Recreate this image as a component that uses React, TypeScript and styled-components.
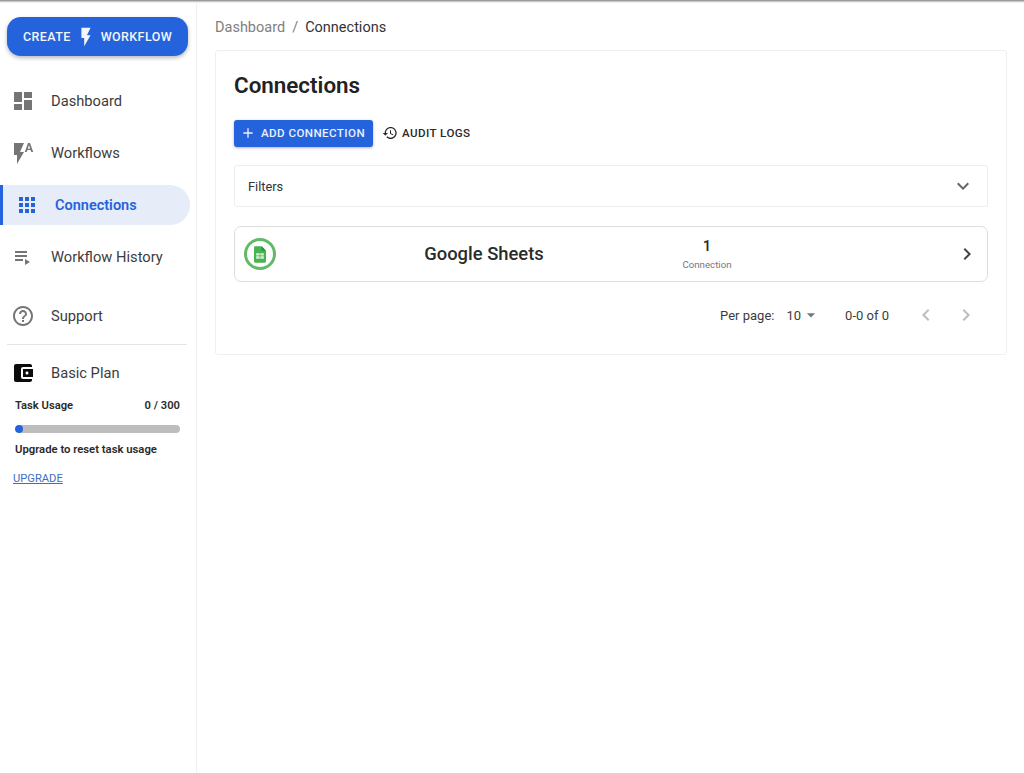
import styled, { createGlobalStyle } from "styled-components";

const blue = "#2563dc";

const paths = {
  dashboard: "M3 13h8V3H3v10zm0 8h8v-6H3v6zm10 0h8V11h-8v10zm0-18v6h8V3h-8z",
  apps: "M4 8h4V4H4v4zm6 12h4v-4h-4v4zm-6 0h4v-4H4v4zm0-6h4v-4H4v4zm6 0h4v-4h-4v4zm6-10v4h4V4h-4zm-6 4h4V4h-4v4zm6 6h4v-4h-4v4zm0 6h4v-4h-4v4z",
  bolt: "M7 2v11h3v9l7-12h-4l4-8z",
  flashAuto: "M3 2v12h3v9l7-12H9l4-9H3zm16 0h-2l-3.2 9h1.9l.7-2h3.2l.7 2h1.9L19 2zm-2.15 5.65L18 4l1.15 3.65h-2.3z",
  playlist: "M4 10h12v2H4zm0-4h12v2H4zm0 8h8v2H4zm10 0v6l5-3z",
  help: "M11 18h2v-2h-2v2zm1-16C6.48 2 2 6.48 2 12s4.48 10 10 10 10-4.48 10-10S17.52 2 12 2zm0 18c-4.41 0-8-3.59-8-8s3.59-8 8-8 8 3.59 8 8-3.59 8-8 8zm0-14c-2.21 0-4 1.79-4 4h2c0-1.1.9-2 2-2s2 .9 2 2c0 2-3 1.75-3 5h2c0-2.25 3-2.5 3-5 0-2.21-1.79-4-4-4z",
  wallet: "M21 18v1c0 1.1-.9 2-2 2H5c-1.11 0-2-.9-2-2V5c0-1.1.89-2 2-2h14c1.1 0 2 .9 2 2v1h-9c-1.11 0-2 .9-2 2v8c0 1.1.89 2 2 2h9zm-9-2h10V8H12v8zm4-2.5c-.83 0-1.5-.67-1.5-1.5s.67-1.5 1.5-1.5 1.5.67 1.5 1.5-.67 1.5-1.5 1.5z",
  history: "M13 3c-4.97 0-9 4.03-9 9H1l3.89 3.89.07.14L9 12H6c0-3.87 3.13-7 7-7s7 3.13 7 7-3.13 7-7 7c-1.93 0-3.68-.79-4.94-2.06l-1.42 1.42C8.27 19.99 10.51 21 13 21c4.97 0 9-4.03 9-9s-4.03-9-9-9zm-1 5v5l4.28 2.54.72-1.21-3.5-2.08V8H12z",
  add: "M19 13h-6v6h-2v-6H5v-2h6V5h2v6h6v2z",
  expand: "M16.59 8.59L12 13.17 7.41 8.59 6 10l6 6 6-6z",
  right: "M10 6L8.59 7.41 13.17 12l-4.58 4.59L10 18l6-6z",
  left: "M15.41 7.41L14 6l-6 6 6 6 1.41-1.41L10.83 12z",
  drop: "M7 10l5 5 5-5z",
};

const GlobalStyle = createGlobalStyle`
  * { box-sizing: border-box; }
  html, body { margin: 0; height: 100%; background: #fff; }
  body { font-family: Roboto, "Liberation Sans", sans-serif; color: #242424; }
`;

const Svg = styled.svg<{ $size: number; $color: string }>`
  width: ${(p) => p.$size}px;
  height: ${(p) => p.$size}px;
  fill: ${(p) => p.$color};
  flex: none;
  display: block;
`;

function Icon({ d, size = 24, color = "#757575" }: { d: string; size?: number; color?: string }) {
  return (
    <Svg viewBox="0 0 24 24" $size={size} $color={color}>
      <path d={d} />
    </Svg>
  );
}

const Page = styled.div`
  height: 773px;
  overflow: hidden;
  display: flex;
  flex-direction: column;
`;

const TopEdge = styled.div`
  height: 3px;
  flex: none;
  background: linear-gradient(#9a9a9a, #9a9a9a 34%, #c9c9c9 34%, #c9c9c9 67%, #efefef 67%);
`;

const Shell = styled.div`
  flex: 1;
  display: flex;
  min-height: 0;
`;

const Sidebar = styled.aside`
  width: 197px;
  flex: none;
  border-right: 1px solid #f0f0f0;
  padding-top: 14px;
  display: flex;
  flex-direction: column;
`;

const CreateButton = styled.button`
  margin: 0 8px 0 7px;
  height: 39px;
  border: 0;
  border-radius: 14px;
  background: ${blue};
  color: #f2f6fe;
  font: 500 12.5px Roboto, sans-serif;
  letter-spacing: 0.4px;
  display: flex;
  align-items: center;
  justify-content: center;
  gap: 4px;
  box-shadow: 0 2px 4px rgba(0, 0, 0, 0.28);
`;

const Nav = styled.nav`
  margin-top: 25px;
  display: flex;
  flex-direction: column;
  gap: 12px;
`;

const NavItem = styled.div<{ $active?: boolean }>`
  height: 40px;
  width: 190px;
  display: flex;
  align-items: center;
  gap: 16px;
  font-size: ${(p) => (p.$active ? 14.5 : 14.7)}px;
  padding-left: ${(p) => (p.$active ? 12 : 11)}px;
  color: ${(p) => (p.$active ? blue : "#3c3c3c")};
  font-weight: ${(p) => (p.$active ? 600 : 400)};
  background: ${(p) => (p.$active ? "#e6edf9" : "transparent")};
  border-left: ${(p) => (p.$active ? `3px solid ${blue}` : "0")};
  border-radius: ${(p) => (p.$active ? "0 20px 20px 0" : "0")};
`;

const SupportItem = styled(NavItem)`
  margin-top: 19px;
`;

const Divider = styled.hr`
  margin: 8px 9px 0 7px;
  border: 0;
  border-top: 1px solid #e4e4e4;
`;

const PlanItem = styled(NavItem)`
  margin-top: 8px;
`;

const Usage = styled.div`
  padding: 6px 16px 0 15px;
`;

const UsageRow = styled.div`
  display: flex;
  justify-content: space-between;
  font-size: 11.2px;
  font-weight: 600;
  color: #2a2a2a;
  line-height: 14px;
`;

const Track = styled.div`
  margin-top: 12px;
  height: 8px;
  border-radius: 4px;
  background: #bdbdbd;
  overflow: hidden;
`;

const Fill = styled.div`
  height: 100%;
  border-radius: 4px;
  background: ${blue};
`;

const UsageNote = styled.div`
  margin-top: 10px;
  font-size: 11.3px;
  font-weight: 600;
  line-height: 14px;
  color: #2a2a2a;
`;

const UpgradeLink = styled.a`
  display: block;
  margin: 15px 0 0 13px;
  font-size: 11.2px;
  line-height: 14px;
  color: #3c6fc4;
  text-decoration: underline;
`;

const Main = styled.main`
  flex: 1;
  padding: 16px 17px 0 18px;
`;

const Crumbs = styled.div`
  display: flex;
  gap: 7px;
  font-size: 14.5px;
  line-height: 18px;
  color: #808080;
`;

const CrumbCurrent = styled.span`
  color: #333;
`;

const Card = styled.section`
  margin-top: 13px;
  height: 305px;
  border: 1px solid #efefef;
  border-radius: 3px;
  padding: 19px 18px 0;
`;

const Title = styled.h1`
  margin: 0;
  font-size: 22.4px;
  line-height: 30px;
  font-weight: 600;
  color: #222;
`;

const Actions = styled.div`
  margin-top: 20px;
  display: flex;
  align-items: center;
  gap: 9px;
`;

const AddButton = styled.button`
  width: 139px;
  height: 27px;
  border: 0;
  border-radius: 3px;
  padding: 0 0 1px 6px;
  background: ${blue};
  color: #eaf0fd;
  font: 500 11.6px Roboto, sans-serif;
  letter-spacing: 0.42px;
  display: flex;
  align-items: center;
  gap: 5px;
  box-shadow: 0 1px 3px rgba(0, 0, 0, 0.3);
`;

const AuditButton = styled.button`
  border: 0;
  padding: 0 0 1px;
  background: none;
  color: #2a2a2a;
  font: 500 11.6px Roboto, sans-serif;
  letter-spacing: 0.42px;
  display: flex;
  align-items: center;
  gap: 4px;
`;

const Filters = styled.div`
  margin-top: 18px;
  height: 42px;
  border: 1px solid #ededed;
  border-radius: 3px;
  padding: 0 12px 0 13px;
  display: flex;
  align-items: center;
  justify-content: space-between;
  font-size: 12.8px;
  color: #333;
`;

const ConnectionRow = styled.div`
  margin-top: 19px;
  height: 56px;
  border: 1px solid #dedede;
  border-radius: 7px;
  padding: 0 8px 0 9px;
  display: grid;
  grid-template-columns: 32px 406px 50px 1fr auto;
  align-items: center;
`;

const SheetBadge = styled.div`
  width: 32px;
  height: 32px;
  border: 3px solid #62b966;
  border-radius: 50%;
  display: flex;
  align-items: center;
  justify-content: center;
`;

const AppName = styled.div`
  margin: 0 0 2px 10px;
  text-align: center;
  font-size: 18.4px;
  font-weight: 500;
  color: #2b2b2b;
`;

const Count = styled.div`
  text-align: center;
  grid-column: 3;
  white-space: nowrap;
  padding-top: 2px;
`;

const CountValue = styled.div`
  font-size: 14px;
  font-weight: 600;
  line-height: 18px;
  color: #2b2b2b;
`;

const CountLabel = styled.div`
  margin-top: 2px;
  font-size: 9.7px;
  line-height: 16px;
  color: #777;
`;

const Chevron = styled.div`
  grid-column: 5;
`;

const Pagination = styled.div`
  margin-top: 21px;
  height: 24px;
  display: flex;
  align-items: center;
  justify-content: flex-end;
  font-size: 13px;
  color: #3c3c3c;
  padding-right: 10px;
`;

const PerPage = styled.span`
  margin-right: 12px;
`;

const PageSize = styled.span`
  display: flex;
  align-items: center;
  margin-right: 24px;
`;

const Range = styled.span`
  margin-right: 25px;
`;

const PagerGap = styled.span`
  width: 16px;
`;

export default function App() {
  return (
    <Page>
      <GlobalStyle />
      <TopEdge />
      <Shell>
        <Sidebar>
          <CreateButton>
            CREATE
            <Icon d={paths.bolt} size={22} color="#f2f6fe" />
            WORKFLOW
          </CreateButton>
          <Nav>
            <NavItem>
              <Icon d={paths.dashboard} />
              Dashboard
            </NavItem>
            <NavItem>
              <Icon d={paths.flashAuto} />
              Workflows
            </NavItem>
            <NavItem $active>
              <Icon d={paths.apps} color={blue} />
              Connections
            </NavItem>
            <NavItem>
              <Icon d={paths.playlist} />
              Workflow History
            </NavItem>
          </Nav>
          <SupportItem>
            <Icon d={paths.help} />
            Support
          </SupportItem>
          <Divider />
          <PlanItem>
            <Icon d={paths.wallet} color="#0c0c0c" />
            Basic Plan
          </PlanItem>
          <Usage>
            <UsageRow>
              <span>Task Usage</span>
              <span>0 / 300</span>
            </UsageRow>
            <Track>
              <Fill style={{ width: `${(8 / 165) * 100}%` }} />
            </Track>
            <UsageNote>Upgrade to reset task usage</UsageNote>
          </Usage>
          <UpgradeLink>UPGRADE</UpgradeLink>
        </Sidebar>
        <Main>
          <Crumbs>
            <span>Dashboard</span>
            <span>/</span>
            <CrumbCurrent>Connections</CrumbCurrent>
          </Crumbs>
          <Card>
            <Title>Connections</Title>
            <Actions>
              <AddButton>
                <Icon d={paths.add} size={16} color="#eaf0fd" />
                ADD CONNECTION
              </AddButton>
              <AuditButton>
                <Icon d={paths.history} size={16} color="#2a2a2a" />
                AUDIT LOGS
              </AuditButton>
            </Actions>
            <Filters>
              Filters
              <Icon d={paths.expand} color="#666" />
            </Filters>
            <ConnectionRow>
              <SheetBadge>
                <svg width="12" height="17" viewBox="0 0 14 19">
                  <path d="M1.5 0H9l5 5v12.5a1.5 1.5 0 0 1-1.5 1.5h-11A1.5 1.5 0 0 1 0 17.5v-16A1.5 1.5 0 0 1 1.5 0z" fill="#46b450" />
                  <path d="M9 0l5 5H9z" fill="#2f8f3b" />
                  <path d="M2.5 8h9v6.5h-9z" fill="#cfeed2" />
                  <path d="M2.5 11h9M7 8v6.5" stroke="#46b450" strokeWidth="0.8" />
                </svg>
              </SheetBadge>
              <AppName>Google Sheets</AppName>
              <Count>
                <CountValue>1</CountValue>
                <CountLabel>Connection</CountLabel>
              </Count>
              <Chevron>
                <Icon d={paths.right} color="#444" />
              </Chevron>
            </ConnectionRow>
            <Pagination>
              <PerPage>Per page:</PerPage>
              <PageSize>
                10
                <Icon d={paths.drop} size={20} color="#777" />
              </PageSize>
              <Range>0-0 of 0</Range>
              <Icon d={paths.left} color="#bdbdbd" />
              <PagerGap />
              <Icon d={paths.right} color="#bdbdbd" />
            </Pagination>
          </Card>
        </Main>
      </Shell>
    </Page>
  );
}
